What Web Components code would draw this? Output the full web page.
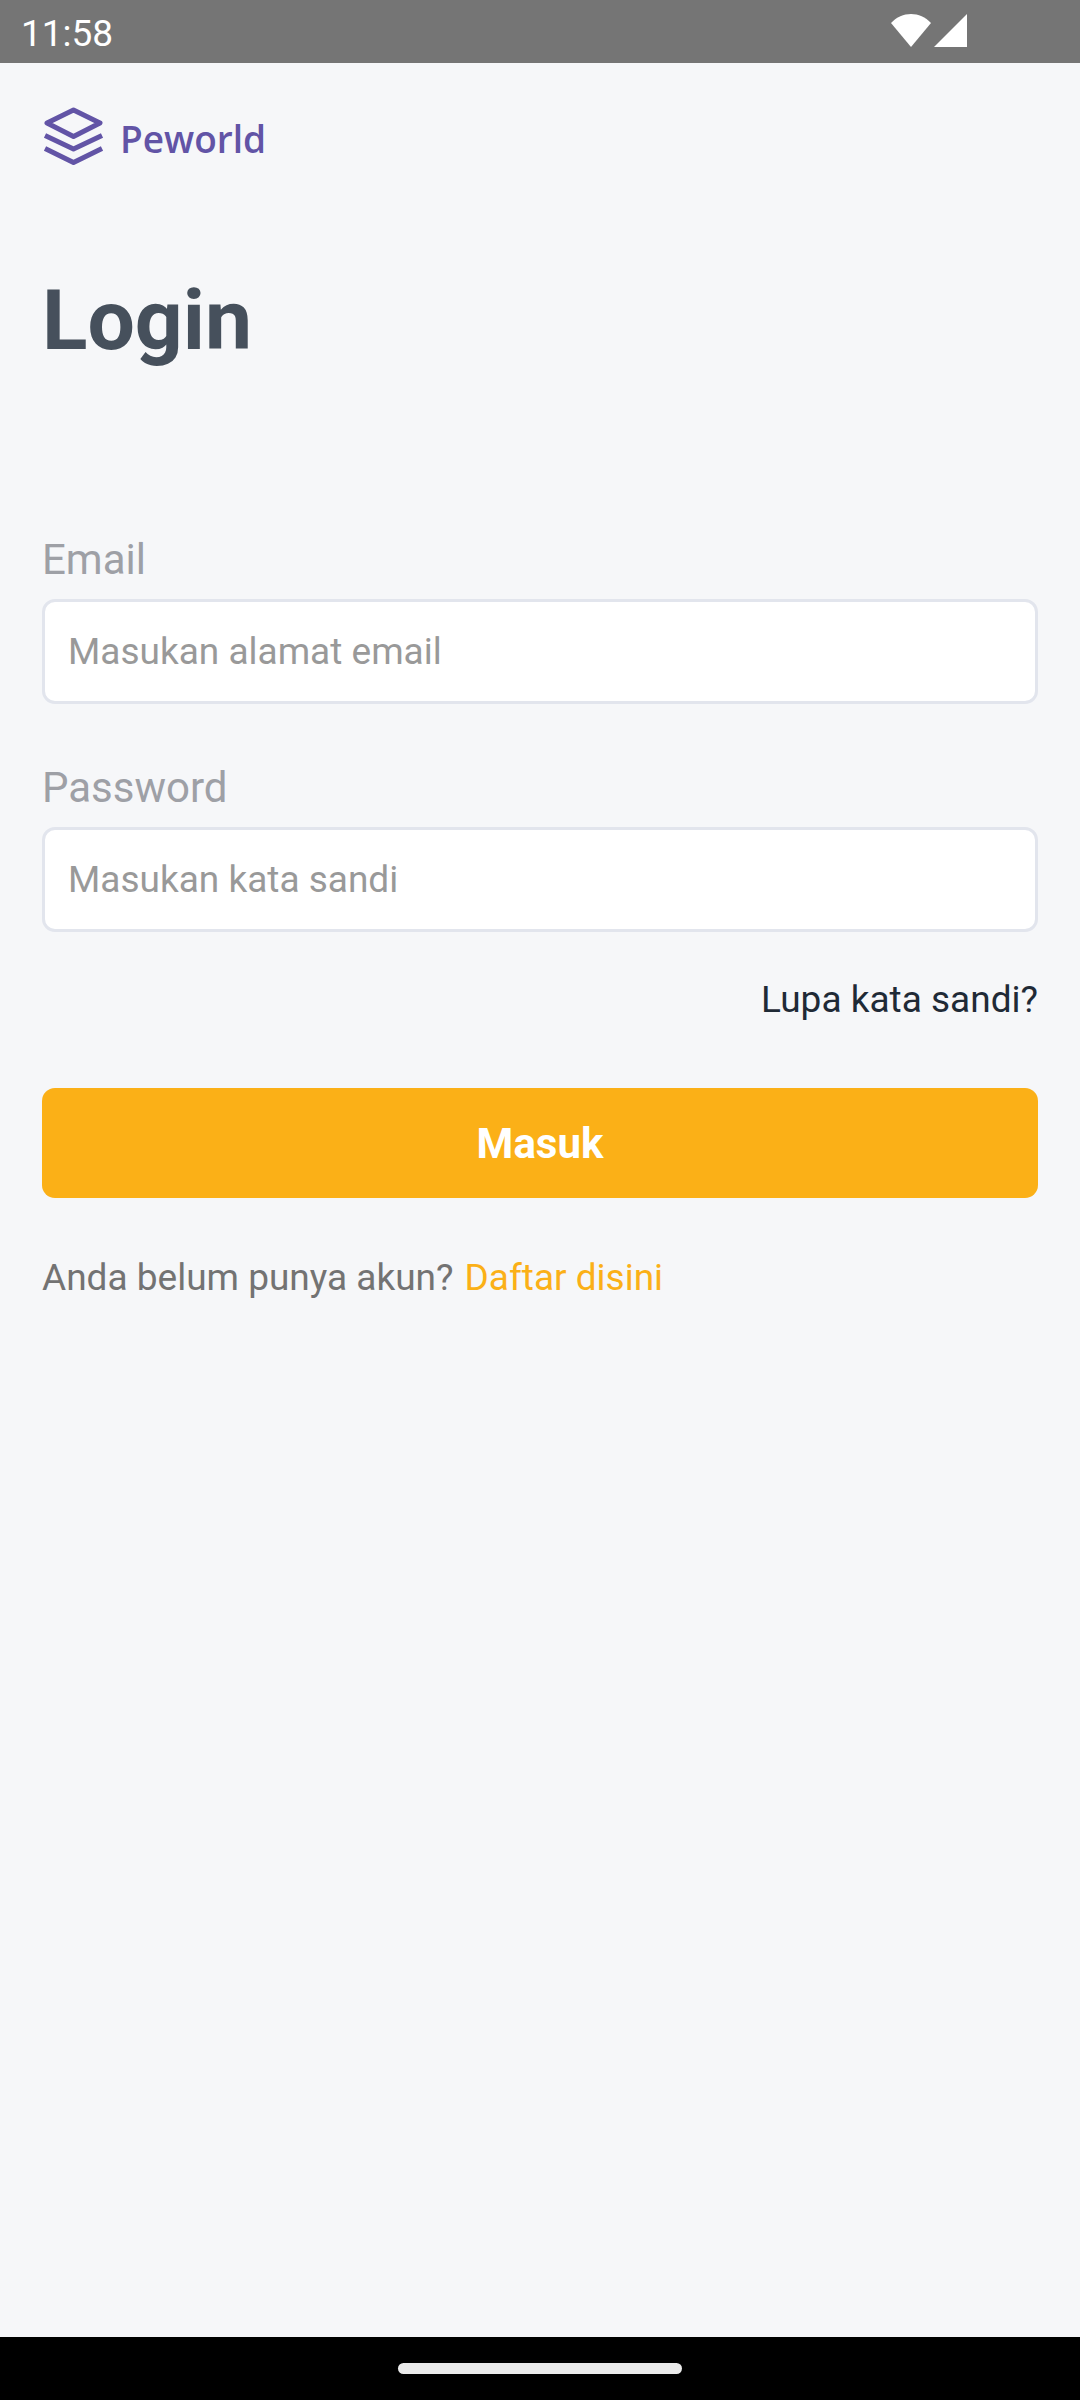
<!DOCTYPE html>
<html lang="id">
<head>
<meta charset="utf-8">
<meta name="viewport" content="width=device-width, initial-scale=1">
<title>Peworld – Login</title>
<style>
  html, body { margin: 0; }
  body {
    background: #f6f7f9;
    font-family: Roboto, "Liberation Sans", sans-serif;
    font-size: 37px;
    line-height: 44px;
  }
</style>
</head>
<body>
<login-screen></login-screen>

<script>
const define = (name, html, setup) => {
  const template = document.createElement('template');
  template.innerHTML = html;
  customElements.define(name, class extends HTMLElement {
    constructor() {
      super();
      this.attachShadow({ mode: 'open' }).append(template.content.cloneNode(true));
    }
    connectedCallback() {
      if (setup) setup(this, this.shadowRoot);
    }
  });
};

define('status-bar', `
  <style>
    :host { display: flex; justify-content: space-between; align-items: flex-start; box-sizing: border-box;
      height: 63px; padding: 12px 113px 0 21px; background: #757575; color: #fff; }
    .icons { display: flex; gap: 3px; padding-top: 2px; }
    svg { display: block; fill: #fff; }
  </style>
  <span>11:58</span>
  <div class="icons">
    <svg width="40" height="33" viewBox="0 0 40 33" aria-label="Wi-Fi"><path d="M20 33 0 9C11 -3 29 -3 40 9Z"/></svg>
    <svg width="33" height="33" viewBox="0 0 33 33" aria-label="Sinyal"><path d="M0 33 33 0V33Z"/></svg>
  </div>`);

define('brand-logo', `
  <style>
    :host { display: flex; align-items: flex-start; gap: 16px; padding-left: 1px; color: #6254a6;
      font: 600 37px/60px "Open Sans", "Noto Sans", sans-serif; }
    svg { display: block; fill: none; stroke: currentColor; stroke-width: 5; stroke-linejoin: round; }
    span { padding-top: 3px; }
  </style>
  <svg width="61" height="60" viewBox="0 0 61 60" aria-hidden="true">
    <path d="M4 17 30.5 4 57 17 30.5 30.5Z"/>
    <path d="M2 29.5 30.5 43 59 29.5M2 42.5 30.5 56.5 59 42.5"/>
  </svg>
  <span>Peworld</span>`);

define('text-field', `
  <style>
    :host { display: flex; flex-direction: column; gap: 14px; }
    label { color: #9ea0a6; font-size: 42px; line-height: 50px; }
    input { box-sizing: border-box; width: 100%; height: 105px; margin: 0; padding: 0 23px;
      border: 3px solid #e2e5ed; border-radius: 13px; background: #fff; color: #1f2a36;
      font: inherit; outline: none; }
    input::placeholder { color: #999; opacity: 1; }
  </style>
  <label for="field"><slot></slot></label>
  <input id="field">`, (host, root) => {
  const input = root.querySelector('input');
  input.type = host.getAttribute('type');
  input.placeholder = host.getAttribute('placeholder');
});

define('primary-button', `
  <style>
    :host { display: block; }
    button { display: block; width: 100%; margin: 0; padding: 31px 30px 29px; border: 0; border-radius: 13px;
      background: #fbb017; color: #fff; font: 700 42px/50px Roboto, "Liberation Sans", sans-serif; cursor: pointer; }
  </style>
  <button type="button"><slot></slot></button>`);

define('text-link', `
  <style>
    :host { display: block; }
    a { color: inherit; text-decoration: none; }
  </style>
  <a href="#"><slot></slot></a>`);

define('gesture-bar', `
  <style>
    :host { display: flex; justify-content: center; align-items: center; height: 63px; background: #000; }
    span { width: 284px; height: 11px; border-radius: 6px; background: #ebebeb; }
  </style>
  <span></span>`);

define('login-screen', `
  <style>
    :host { display: flex; flex-direction: column; min-height: 100vh; }
    main { flex: 1; padding: 43px 42px; }
    h1 { margin: 103px 0 165px; color: #46505c; font-size: 84px; line-height: 98px; font-weight: 700; }
    .fields { display: flex; flex-direction: column; gap: 59px; }
    .forgot { display: flex; justify-content: flex-end; margin: 46px 0 66px; color: #1f2a36; }
    .signup { display: flex; gap: 11px; margin-top: 58px; color: #737373; }
    .signup text-link { color: #fbb017; }
  </style>
  <status-bar></status-bar>
  <main>
    <brand-logo></brand-logo>
    <h1>Login</h1>
    <div class="fields">
      <text-field type="email" placeholder="Masukan alamat email">Email</text-field>
      <text-field type="password" placeholder="Masukan kata sandi">Password</text-field>
    </div>
    <div class="forgot"><text-link>Lupa kata sandi?</text-link></div>
    <primary-button>Masuk</primary-button>
    <div class="signup"><span>Anda belum punya akun?</span><text-link>Daftar disini</text-link></div>
  </main>
  <gesture-bar></gesture-bar>`);
</script>
</body>
</html>
